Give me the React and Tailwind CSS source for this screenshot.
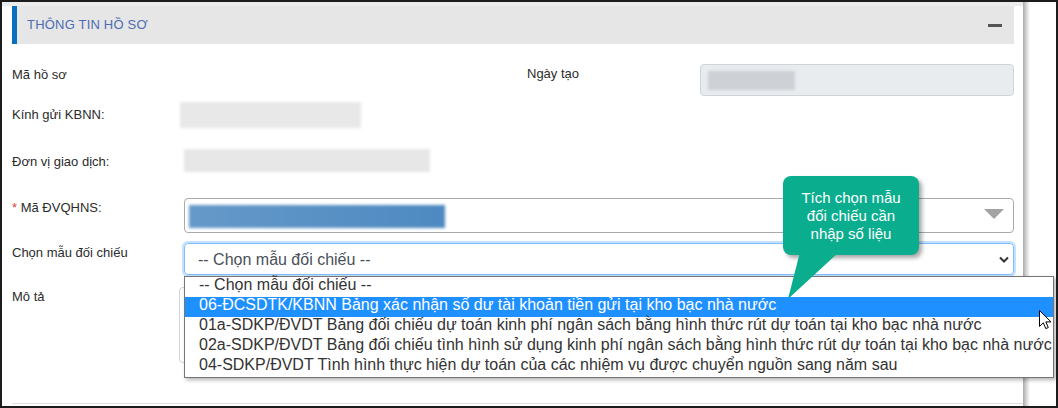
import React from "react";

const options = [
  "-- Chọn mẫu đối chiếu --",
  "06-ĐCSDTK/KBNN Bảng xác nhận số dư tài khoản tiền gửi tại kho bạc nhà nước",
  "01a-SDKP/ĐVDT Bảng đối chiếu dự toán kinh phí ngân sách bằng hình thức rút dự toán tại kho bạc nhà nước",
  "02a-SDKP/ĐVDT Bảng đối chiếu tình hình sử dụng kinh phí ngân sách bằng hình thức rút dự toán tại kho bạc nhà nước",
  "04-SDKP/ĐVDT Tình hình thực hiện dự toán của các nhiệm vụ được chuyển nguồn sang năm sau",
];

function Blur({ className }) {
  // masked value in the screenshot
  return <div className={`blur-[1.5px] ${className}`} />;
}

function Label({ children, className = "" }) {
  return (
    <div className={`shrink-0 text-[13px] leading-[20px] text-[#2b2b2b] ${className}`}>
      {children}
    </div>
  );
}

export default function App() {
  return (
    <div className="relative w-[1058px] h-[408px] overflow-hidden border-2 border-[#1c1c1c] bg-white flex font-['Liberation_Sans',Arial,sans-serif]">
      {/* main column */}
      <div className="w-[1021px] shrink-0 flex flex-col">
        <div className="h-[4px] bg-[#ececec]" />
        <div className="pl-[10px] flex flex-col">
          {/* panel header */}
          <div className="w-[1002px] h-[38px] bg-[#e6e6e6] border-l-[5px] border-[#0b6fbf] flex items-center justify-between pl-[10px] pr-[12px]">
            <span className="text-[13px] text-[#4d6db3] tracking-[0.2px]">THÔNG TIN HỒ SƠ</span>
            <div className="w-[14px] h-[3px] bg-[#555]" />
          </div>

          {/* Mã hồ sơ / Ngày tạo */}
          <div className="mt-[20px] flex h-[32px] w-[1002px]">
            <Label className="w-[515px] pt-[1px]">Mã hồ sơ</Label>
            <Label className="w-[173px]">Ngày tạo</Label>
            <div className="flex-1 rounded-[4px] border border-[#ced4da] bg-[#e9ecef] pl-[7px] pt-[6px]">
              <Blur className="w-[87px] h-[19px] bg-[#cdd0d4]" />
            </div>
          </div>

          {/* Kính gửi */}
          <div className="mt-[6px] flex h-[26px]">
            <Label className="w-[168px] pt-[3px]">Kính gửi KBNN:</Label>
            <Blur className="w-[181px] h-[26px] bg-[#e8e8e8]" />
          </div>

          {/* Đơn vị giao dịch */}
          <div className="mt-[21px] flex h-[23px]">
            <Label className="w-[172px] pt-[3px]">Đơn vị giao dịch:</Label>
            <Blur className="w-[246px] h-[23px] bg-[#e7e7e7]" />
          </div>

          {/* Mã ĐVQHNS */}
          <div className="mt-[26px] flex h-[35px]">
            <Label className="w-[172px]">
              <span className="text-[#e0413a]">*</span> Mã ĐVQHNS:
            </Label>
            <div className="w-[830px] rounded-[4px] border border-[#aaa] flex items-start justify-between pl-[4px] pt-[6px] pr-[9px]">
              <Blur className="w-[256px] h-[23px] bg-gradient-to-r from-[#6599c9] to-[#4d89c0]" />
              <svg width="20" height="10" viewBox="0 0 20 10" className="mt-[4px]">
                <polygon points="0,0 20,0 10,10" fill="#a3a3a3" />
              </svg>
            </div>
          </div>

          {/* Chọn mẫu đối chiếu */}
          <div className="mt-[10px] flex h-[32px]">
            <Label className="w-[172px]">Chọn mẫu đối chiếu</Label>
            <div className="relative w-[830px] rounded-[4px] border border-[#80bdff] shadow-[0_0_0_2px_rgba(128,189,255,0.45)] flex items-center justify-between pl-[13px] pr-[4px]">
              <span className="text-[16px] text-[#495057] pt-[1px]">-- Chọn mẫu đối chiếu --</span>
              <svg width="10" height="7" viewBox="0 0 10 7">
                <path d="M1 1.5 L5 5.5 L9 1.5" fill="none" stroke="#333" strokeWidth="2" />
              </svg>

              {/* open option list */}
              <div className="absolute left-[-1px] top-[32px] z-10 w-[870px] h-[102px] border border-[#767676] bg-white shadow-[2px_2px_4px_rgba(0,0,0,0.3)] pt-[0px]">
                {options.map((o, i) => (
                  <div
                    key={o}
                    className={`h-[20px] pl-[14px] text-[16px] leading-[16px] whitespace-nowrap ${
                      i === 1 ? "bg-[#1e90ff] text-white" : "text-[#333]"
                    }`}
                  >
                    {o}
                  </div>
                ))}
              </div>
            </div>
          </div>

          {/* Mô tả */}
          <div className="mt-[12px] flex h-[76px]">
            <Label className="w-[167px]">Mô tả</Label>
            <div className="w-[835px] rounded-[4px] border border-[#ced4da] bg-white" />
          </div>

          <div className="mt-[40px] w-[1011px] h-px bg-[#dedede]" />
        </div>
      </div>

      {/* window edge shadow */}
      <div className="w-[7px] shrink-0 bg-gradient-to-r from-[#a9a9a9] via-[#d8d8d8] to-white" />
      <div className="flex-1" />

      {/* callout */}
      <div className="absolute left-[781px] top-[174px] z-20">
        <div className="w-[136px] h-[79px] rounded-[8px] bg-[#0aad8e] shadow-[3px_3px_4px_rgba(0,0,0,0.35)] flex flex-col items-center pt-[13px] text-white text-[15px] leading-[18px] text-center">
          <span>Tích chọn mẫu</span>
          <span>đối chiếu cần</span>
          <span>nhập số liệu</span>
        </div>
        <svg width="60" height="50" viewBox="0 0 60 50" className="absolute left-0 top-[76px]">
          <polygon points="17,0 56,0 5,47" fill="#0aad8e" />
        </svg>
      </div>

      {/* mouse pointer */}
      <svg width="13" height="20" viewBox="0 0 13 20" className="absolute left-[1037px] top-[308px] z-30">
        <path
          d="M0.5 0.5 L0.5 16.5 L4.3 12.8 L6.8 18.6 L9.3 17.5 L6.8 11.9 L12 11.9 Z"
          fill="white"
          stroke="black"
          strokeWidth="1"
          strokeLinejoin="round"
        />
      </svg>
    </div>
  );
}
